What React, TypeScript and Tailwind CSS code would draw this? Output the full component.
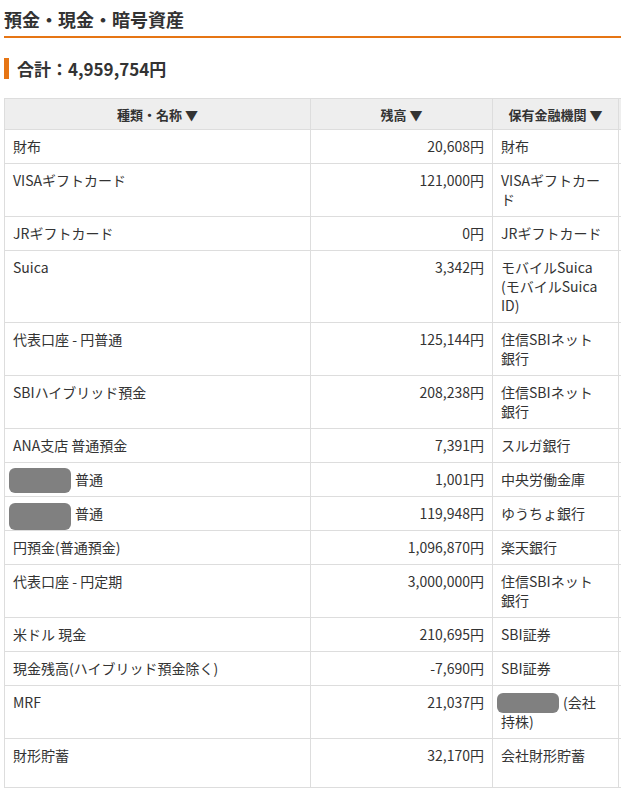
import React from 'react';

type Row = {
  name: React.ReactNode;
  amount: string;
  bank: React.ReactNode;
  tall?: boolean;
};

// Redaction blob over masked text
function Mask({ h = 25, top = -2 }: { h?: number; top?: number }) {
  return (
    <span className="relative inline-block w-[62px] h-[19px] align-top">
      <span
        className="absolute -left-1 w-[62px] rounded-md bg-[#808080]"
        style={{ height: h, top }}
      />
    </span>
  );
}

const rows: Row[] = [
  { name: '財布', amount: '20,608円', bank: '財布' },
  { name: 'VISAギフトカード', amount: '121,000円', bank: <>VISAギフトカー<br />ド</> },
  { name: 'JRギフトカード', amount: '0円', bank: 'JRギフトカード' },
  { name: 'Suica', amount: '3,342円', bank: <>モバイルSuica<br />(モバイルSuica<br />ID)</> },
  { name: '代表口座 - 円普通', amount: '125,144円', bank: <>住信SBIネット<br />銀行</> },
  { name: 'SBIハイブリッド預金', amount: '208,238円', bank: <>住信SBIネット<br />銀行</> },
  { name: 'ANA支店 普通預金', amount: '7,391円', bank: 'スルガ銀行' },
  { name: <><Mask />普通</>, amount: '1,001円', bank: '中央労働金庫' },
  { name: <><Mask h={27} top={-1} />普通</>, amount: '119,948円', bank: 'ゆうちょ銀行' },
  { name: '円預金(普通預金)', amount: '1,096,870円', bank: '楽天銀行' },
  { name: '代表口座 - 円定期', amount: '3,000,000円', bank: <>住信SBIネット<br />銀行</> },
  { name: '米ドル 現金', amount: '210,695円', bank: 'SBI証券' },
  { name: '現金残高(ハイブリッド預金除く)', amount: '-7,690円', bank: 'SBI証券' },
  { name: 'MRF', amount: '21,037円', bank: <><Mask h={20} top={0} />(会社<br />持株)</> },
  { name: '財形貯蓄', amount: '32,170円', bank: '会社財形貯蓄', tall: true },
];

const headers = ['種類・名称', '残高', '保有金融機関'];

export default function App() {
  return (
    <div
      className="min-h-screen bg-white text-[#333333] overflow-hidden"
      style={{ fontFamily: '"Noto Sans CJK JP", "Noto Sans", sans-serif' }}
    >
      <div className="pl-1">
        {/* Section title */}
        <h2 className="pt-[6px] pb-[3px] text-[18px] leading-[27px] font-bold border-b-2 border-[#e67514]">
          預金・現金・暗号資産
        </h2>

        {/* Total */}
        <h3 className="mt-[20px] border-l-[5px] border-[#e67514] pl-[8px] text-[17px] leading-[21px] font-bold">
          合計：4,959,754円
        </h3>

        <div className="mt-[19px] overflow-hidden">
          <table className="table-fixed border-collapse w-[734px] text-[14px] leading-[19px]">
            <colgroup>
              <col className="w-[306px]" />
              <col className="w-[182px]" />
              <col className="w-[126px]" />
              <col className="w-[120px]" />
            </colgroup>
            <thead>
              <tr className="bg-[#eeeeee] h-[31px]">
                {headers.map((h) => (
                  <th key={h} className="border border-[#dddddd] text-[13px] font-bold text-center">
                    {h}
                    <span className="ml-[3px]">▼</span>
                  </th>
                ))}
                <th className="border border-[#dddddd]"></th>
              </tr>
            </thead>
            <tbody>
              {rows.map((r, i) => (
                <tr key={i} className={r.tall ? 'h-[49px]' : ''}>
                  <td className="border border-[#dddddd] px-2 py-[7px] align-top">{r.name}</td>
                  <td className="border border-[#dddddd] px-2 py-[7px] align-top text-right">{r.amount}</td>
                  <td className="border border-[#dddddd] px-2 py-[7px] align-top">{r.bank}</td>
                  <td className="border border-[#dddddd] px-2 py-[7px] align-top"></td>
                </tr>
              ))}
            </tbody>
          </table>
        </div>
      </div>
    </div>
  );
}
